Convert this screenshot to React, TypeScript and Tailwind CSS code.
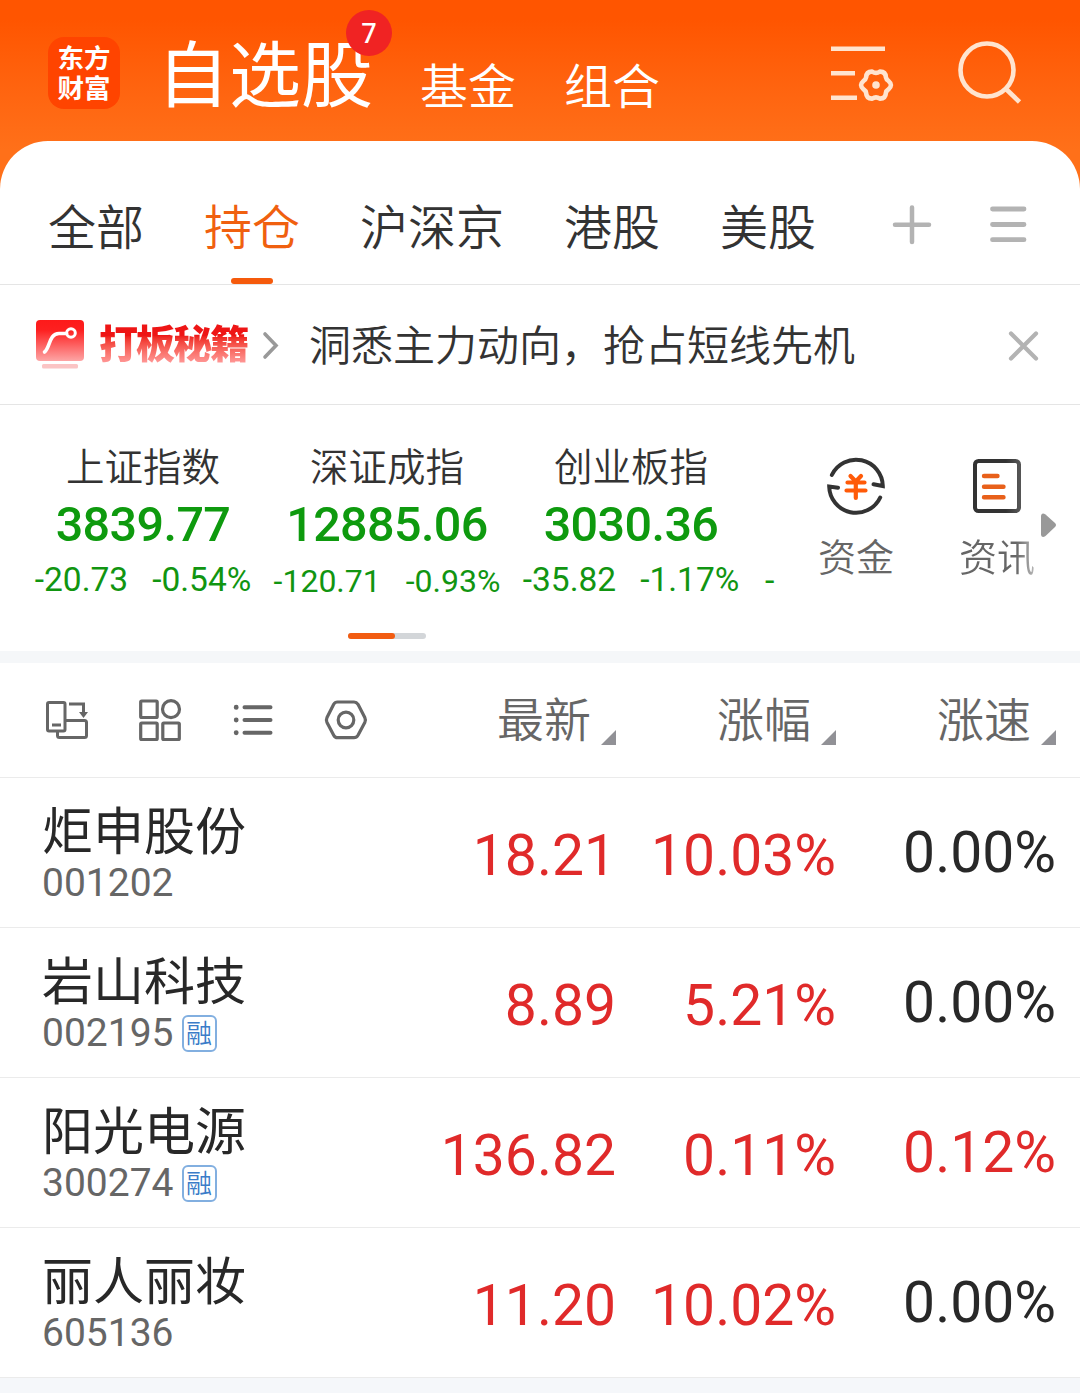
type Quote = {
  name: string
  code: string
  margin?: boolean
  price: string
  change: string
  speed: string
  speedUp?: boolean
}

const marketTabs = ["全部", "持仓", "沪深京", "港股", "美股"]

const indices = [
  { name: "上证指数", value: "3839.77", diff: "-20.73", pct: "-0.54%", small: false },
  { name: "深证成指", value: "12885.06", diff: "-120.71", pct: "-0.93%", small: true },
  { name: "创业板指", value: "3030.36", diff: "-35.82", pct: "-1.17%", small: false },
]

const columns = ["最新", "涨幅", "涨速"]

const quotes: Quote[] = [
  { name: "炬申股份", code: "001202", price: "18.21", change: "10.03%", speed: "0.00%" },
  { name: "岩山科技", code: "002195", margin: true, price: "8.89", change: "5.21%", speed: "0.00%" },
  { name: "阳光电源", code: "300274", margin: true, price: "136.82", change: "0.11%", speed: "0.12%", speedUp: true },
  { name: "丽人丽妆", code: "605136", price: "11.20", change: "10.02%", speed: "0.00%" },
]

function Header() {
  return (
    <header className="flex h-[141px] items-start pl-12 text-white">
      <div className="mt-[37px] flex h-[72px] w-[72px] flex-col items-center justify-center rounded-2xl bg-[#ff4400] pt-0.5 text-[26.5px] leading-[30px] font-bold">
        <span>东方</span>
        <span>财富</span>
      </div>
      <div className="relative mt-[37px] ml-[37px] text-[72px] leading-[80px] font-normal">
        自选股
        <span className="absolute -top-[27px] left-[189px] flex h-[46px] w-[46px] items-center justify-center rounded-full bg-[#f02323] pb-0.5 font-['Noto_Sans'] text-[27px] leading-none font-medium">
          7
        </span>
      </div>
      <div className="mt-[58px] ml-[47px] text-[48px] leading-[60px]">基金</div>
      <div className="mt-[58px] ml-[48px] text-[48px] leading-[60px]">组合</div>
      <svg className="mt-[40px] ml-auto" width="68" height="68" viewBox="828 40 68 68" fill="none" stroke="#ffe4cf" strokeWidth="4.6">
        <path d="M831 48.7H885M831 73.3H855M831 97.7H857" />
        <path
          strokeLinejoin="round"
          d="M872.2 71.6Q876 74.2 879.8 71.6Q885.600 71.400 885.9 77.300Q886.3 79.500 888.500 80.900Q893.400 85 888.500 89.300Q886.300 90.700 885.900 92.900Q885.600 98.700 879.800 98.600Q876 96 872.200 98.600Q866.400 98.700 866.100 92.900Q865.700 90.700 863.500 89.300Q858.600 85 863.500 80.900Q865.700 79.500 866.100 77.300Q866.400 71.400 872.200 71.600Z"
        />
        <circle cx="876" cy="85" r="3.8" fill="#ffe4cf" stroke="none" />
      </svg>
      <svg className="mt-[38px] mr-[54px] ml-[58px]" width="72" height="68" viewBox="954 38 72 68" fill="none" stroke="#ffe4cf" strokeWidth="4.6">
        <circle cx="987" cy="70" r="26.500" />
        <path d="M1005.500 88.500L1019.500 102" />
      </svg>
    </header>
  )
}

function MarketTabs() {
  return (
    <nav className="flex h-36 items-start border-b border-[#e5e5e5] pl-12 text-[#333]">
      <div className="flex gap-[60px] text-[48px]">
        {marketTabs.map((tab) => (
          <div
            key={tab}
            className={
              tab === "持仓"
                ? "flex h-[143px] flex-col items-center pt-[58px] leading-[60px] text-[#f0600f]"
                : "h-[143px] pt-[58px] leading-[60px]"
            }
          >
            {tab}
            {tab === "持仓" && <span className="mt-auto h-1.5 w-[42px] rounded-full bg-[#f55a0c]" />}
          </div>
        ))}
      </div>
      <svg className="mt-[60px] ml-[72px]" width="48" height="48" viewBox="888 201 48 48" stroke="#b3b3b3" strokeWidth="4.500" strokeLinecap="round">
        <path d="M895 224.700H929M912 207.500V242" />
      </svg>
      <svg className="mt-[60px] ml-12" width="48" height="48" viewBox="984 201 48 48" stroke="#b3b3b3" strokeWidth="4.800" strokeLinecap="round">
        <path d="M992.500 209H1024M992.500 224.500H1024M992.500 239.700H1024" />
      </svg>
    </nav>
  )
}

function Promo() {
  return (
    <div className="flex h-[120px] items-start border-b border-[#e5e5e5] pl-9">
      <svg className="mt-[34px]" width="48" height="50" viewBox="36 319 48 50" fill="none">
        <defs>
          <linearGradient id="promo" x1="0" y1="0" x2="0" y2="1">
            <stop offset="0" stopColor="#fd1a1a" />
            <stop offset="0.25" stopColor="#fd2020" />
            <stop offset="1" stopColor="#fda5a5" />
          </linearGradient>
        </defs>
        <rect x="36" y="320" width="48" height="41" rx="4" fill="url(#promo)" />
        <rect x="42" y="364" width="36" height="4.500" rx="1.500" fill="#fbc4c4" />
        <path d="M44.500 352C50 348 49 333.500 59 333.500H66.500" stroke="#fff" strokeWidth="3.600" strokeLinecap="round" />
        <circle cx="71" cy="333" r="4.300" stroke="#fff" strokeWidth="3" />
      </svg>
      <span className="mt-[36px] ml-[15px] w-[149px] bg-gradient-to-b from-[#ee1515] from-30% to-[#ff9c9c] to-90% bg-clip-text text-[39px] leading-[48px] font-black tracking-[-1.9px] whitespace-nowrap text-transparent">
        打板秘籍
      </span>
      <svg className="mt-[43px] ml-3" width="20" height="34" viewBox="260 328 20 34" fill="none" stroke="#999" strokeWidth="3.600" strokeLinecap="round">
        <path d="M265 334L276 345.500L265 357" />
      </svg>
      <span className="mt-[33px] ml-[29px] text-[42px] leading-[58px] text-[#333]">洞悉主力动向，抢占短线先机</span>
      <svg className="mt-[43px] mr-10 ml-auto" width="34" height="36" viewBox="1006 328 34 36" stroke="#b3b3b3" strokeWidth="4.200" strokeLinecap="round">
        <path d="M1011 333.500L1036 358.500M1036 333.500L1011 358.500" />
      </svg>
    </div>
  )
}

function IndexPanel() {
  return (
    <section className="flex h-[246px]">
      <div className="w-[776px] overflow-hidden">
        <div className="flex h-[228px] w-[1000px] pl-[21px]">
          {indices.map((item) => (
            <div key={item.name} className="flex w-[244px] shrink-0 flex-col items-center pt-[37px] whitespace-nowrap">
              <div className="text-[38.500px] leading-[52px] text-[#333]">{item.name}</div>
              <div className="mt-1.5 text-[48.500px] leading-[50px] font-medium tracking-[-0.6px] text-[#0e9a0e]">{item.value}</div>
              <div
                className={
                  item.small
                    ? "mt-[9px] flex gap-[25px] text-[32px] leading-[44px] font-normal text-[#119511]"
                    : "mt-2 flex gap-[24px] text-[33.500px] leading-[44px] font-normal text-[#119511]"
                }
              >
                <span>{item.diff}</span>
                <span>{item.pct}</span>
              </div>
            </div>
          ))}
          <div className="pt-[153px] pl-3 text-[34px] leading-[44px] font-normal whitespace-nowrap text-[#119511]">-</div>
        </div>
        <div className="ml-[348px] h-1.5 w-[78px] rounded-full bg-[#d3d6d9]">
          <div className="h-1.5 w-[47px] rounded-full bg-[#f25c11]" />
        </div>
      </div>
      <div className="flex w-[160px] flex-col items-center pt-[50px] text-[38px] leading-[48px] text-[#666]">
        <svg width="62" height="62" viewBox="825 455 62 62" fill="none" stroke="#333" strokeWidth="4" strokeLinecap="round">
          <path d="M831.800 475A26.800 26.800 0 0 1 882.800 486L873.500 484.300" />
          <path d="M880.200 497.500A26.800 26.800 0 0 1 829.200 486.500L838 487.700" />
          <path d="M850.500 476L855.800 481.500L861 476M847.500 482.500H864.500M846.500 490.500H865.500M855.800 481V498" stroke="#ff5a08" strokeWidth="4.200" />
        </svg>
        <span className="mt-[17px]">资金</span>
      </div>
      <div className="flex w-[100px] flex-col items-center pt-[50px] pl-[22px] text-[38px] leading-[48px]">
        <svg width="62" height="62" viewBox="966 455 62 62" fill="none" strokeWidth="4">
          <defs>
            <linearGradient id="doc" x1="0" y1="0" x2="1" y2="0">
              <stop offset="0.700" stopColor="#333" />
              <stop offset="1" stopColor="#555" />
            </linearGradient>
          </defs>
          <rect x="975" y="461" width="44" height="50" rx="3.500" stroke="url(#doc)" />
          <path d="M984 476H997.500M984 486.700H1003.500M984 497.200H1003.500" stroke="#e8601a" strokeWidth="4.400" strokeLinecap="round" />
        </svg>
        <span className="mt-[17px] bg-gradient-to-r from-[#666] from-75% to-[#bbb] bg-clip-text text-transparent">资讯</span>
      </div>
      <svg className="mt-[106px] ml-[2px]" width="20" height="28" viewBox="1038 511 20 28" fill="#999">
        <path d="M1041 515.500Q1042 512 1045.500 514.500L1055 523Q1057 525 1055 527L1045.500 536Q1042 538.500 1041 535Z" />
      </svg>
    </section>
  )
}

function TableHead() {
  return (
    <div className="flex h-[115px] items-start border-b border-[#ebebeb] text-[#666]">
      <div className="flex w-[420px] gap-[45px] pt-[33px] pl-[43px]">
        <svg width="48" height="48" viewBox="43 696 48 48" fill="none" stroke="currentColor" strokeWidth="3">
          <rect x="47.500" y="702.500" width="17.500" height="28.500" rx="1.500" />
          <path d="M52 725H61M65.500 720.500H84.500Q86.500 720.500 86.500 722.500V735.500Q86.500 737.500 84.500 737.500H59.500Q57.500 737.500 57.500 735.500V731M69 704H83.500V714" />
          <path d="M79 712H88L83.500 718Z" fill="currentColor" stroke="none" />
        </svg>
        <svg width="48" height="48" viewBox="136 696 48 48" fill="none" stroke="currentColor" strokeWidth="3.200">
          <rect x="140.700" y="701" width="16.500" height="16.500" rx="1" />
          <circle cx="171" cy="709.200" r="8.500" />
          <rect x="140.700" y="723" width="16.500" height="16.500" rx="1" />
          <rect x="162.800" y="723" width="16.500" height="16.500" rx="1" />
        </svg>
        <svg width="48" height="48" viewBox="229 696 48 48" stroke="currentColor" strokeWidth="4" strokeLinecap="round">
          <path d="M236.200 707.200V707.400M236.200 719.900V720.100M236.200 732.600V732.800" strokeWidth="4.800" />
          <path d="M244.500 707.300H270.500M244.500 720H270.500M244.500 732.700H270.500" />
        </svg>
        <svg width="48" height="48" viewBox="322 696 48 48" fill="none" stroke="currentColor" strokeWidth="3.200" strokeLinejoin="round">
          <path d="M337.500 702H354Q356.500 702 358 704.300L364.800 717.500Q366 720 364.800 722.500L358 735.200Q356.500 737.700 354 737.700H337.500Q335 737.700 333.700 735.200L327 722.500Q325.800 720 327 717.500L333.700 704.300Q335 702 337.500 702Z" />
          <circle cx="346" cy="720" r="7.800" />
        </svg>
      </div>
      {columns.map((label) => (
        <div key={label} className="flex w-[220px] justify-end pt-[28px] pr-6 text-[47px] leading-[60px]">
          {label}
          <svg className="mt-[39px] ml-[10px]" width="15" height="15" viewBox="0 0 15 15" fill="#919196">
            <path d="M15 0V15H0Z" />
          </svg>
        </div>
      ))}
    </div>
  )
}

function QuoteRow({ quote }: { quote: Quote }) {
  return (
    <div className="flex h-[150px] border-b border-[#ebebeb] text-[57px] leading-[70px] font-normal text-[#e02a2a]">
      <div className="w-[420px] pt-[25px] pl-[42px]">
        <div className="text-[51px] leading-[60px] text-[#282828]">{quote.name}</div>
        <div className="-mt-px flex items-center text-[39px] leading-[42px] text-[#666]">
          {quote.code}
          {quote.margin && (
            <span className="ml-[8px] flex h-[37px] w-[35px] items-center justify-center rounded-md border-2 border-[#82afe0] pt-0.5 text-[26px] leading-none font-[350] text-[#3b7cc8]">
              融
            </span>
          )}
        </div>
      </div>
      <div className="w-[220px] pt-[43px] pr-6 text-right">{quote.price}</div>
      <div className="w-[220px] pt-[43px] pr-6 text-right">{quote.change}</div>
      <div className={quote.speedUp ? "w-[220px] pt-[40px] pr-6 text-right" : "w-[220px] pt-[40px] pr-6 text-right text-[#282828]"}>
        {quote.speed}
      </div>
    </div>
  )
}

export default function App() {
  return (
    <div className="h-[1393px] w-[1080px] overflow-hidden bg-[#f5f7fa] font-['Roboto','Noto_Sans_CJK_SC',sans-serif] font-[350]">
      <div className="bg-linear-to-b from-[#ff5500] from-[20px] to-[#ff7019] to-[150px]">
        <Header />
        <main className="rounded-t-[48px] bg-white">
          <MarketTabs />
          <Promo />
          <IndexPanel />
          <div className="h-3 bg-[#f5f7f9]" />
          <TableHead />
          {quotes.map((quote) => (
            <QuoteRow key={quote.code} quote={quote} />
          ))}
        </main>
      </div>
    </div>
  )
}
